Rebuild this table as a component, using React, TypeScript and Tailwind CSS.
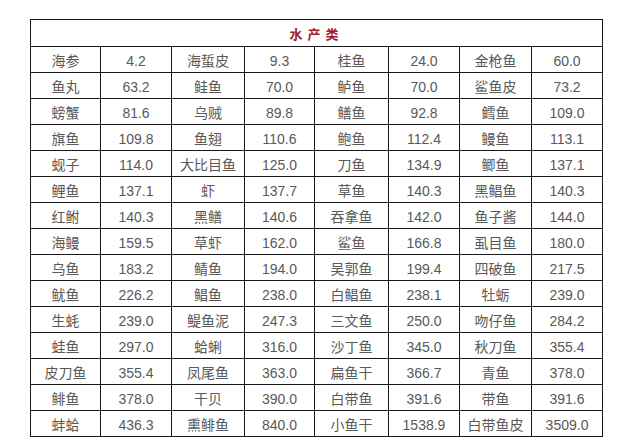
const rows: [string, string, string, string, string, string, string, string][] = [
  ['海参', '4.2', '海蜇皮', '9.3', '桂鱼', '24.0', '金枪鱼', '60.0'],
  ['鱼丸', '63.2', '鲑鱼', '70.0', '鲈鱼', '70.0', '鲨鱼皮', '73.2'],
  ['螃蟹', '81.6', '乌贼', '89.8', '鳝鱼', '92.8', '鳕鱼', '109.0'],
  ['旗鱼', '109.8', '鱼翅', '110.6', '鲍鱼', '112.4', '鳗鱼', '113.1'],
  ['蚬子', '114.0', '大比目鱼', '125.0', '刀鱼', '134.9', '鲫鱼', '137.1'],
  ['鲤鱼', '137.1', '虾', '137.7', '草鱼', '140.3', '黑鲳鱼', '140.3'],
  ['红鲋', '140.3', '黑鳝', '140.6', '吞拿鱼', '142.0', '鱼子酱', '144.0'],
  ['海鳗', '159.5', '草虾', '162.0', '鲨鱼', '166.8', '虱目鱼', '180.0'],
  ['乌鱼', '183.2', '鲭鱼', '194.0', '吴郭鱼', '199.4', '四破鱼', '217.5'],
  ['鱿鱼', '226.2', '鲳鱼', '238.0', '白鲳鱼', '238.1', '牡蛎', '239.0'],
  ['生蚝', '239.0', '鳀鱼泥', '247.3', '三文鱼', '250.0', '吻仔鱼', '284.2'],
  ['蛙鱼', '297.0', '蛤蜊', '316.0', '沙丁鱼', '345.0', '秋刀鱼', '355.4'],
  ['皮刀鱼', '355.4', '凤尾鱼', '363.0', '扁鱼干', '366.7', '青鱼', '378.0'],
  ['鲱鱼', '378.0', '干贝', '390.0', '白带鱼', '391.6', '带鱼', '391.6'],
  ['蚌蛤', '436.3', '熏鲱鱼', '840.0', '小鱼干', '1538.9', '白带鱼皮', '3509.0'],
]

const widths = ['w-[70px]', 'w-[71px]', 'w-[73px]', 'w-[70px]', 'w-[74px]', 'w-[71px]', 'w-[72px]', 'w-[71px]']

export default function App() {
  return (
    <div className="min-h-screen bg-white pl-[30px] pt-[19px] font-['Liberation_Sans','Noto_Sans_CJK_SC',sans-serif] text-[14px] text-[#595959]">
      <table className="w-[573px] table-fixed border-collapse">
        <colgroup>
          {widths.map((w, i) => (
            <col key={i} className={w} />
          ))}
        </colgroup>
        <thead>
          <tr className="h-[27px]">
            <th
              colSpan={8}
              className="border border-[#1a1a1a] pt-[3px] text-center text-[13px] font-bold tracking-[5px] text-[#a3192f]"
            >
              水产类
            </th>
          </tr>
        </thead>
        <tbody>
          {rows.map((r, i) => (
            <tr key={i} className="h-[26px]">
              {r.map((c, j) => (
                <td key={j} className="border border-[#1a1a1a] p-0 pt-[2px] text-center leading-none">
                  {c}
                </td>
              ))}
            </tr>
          ))}
        </tbody>
      </table>
    </div>
  )
}
